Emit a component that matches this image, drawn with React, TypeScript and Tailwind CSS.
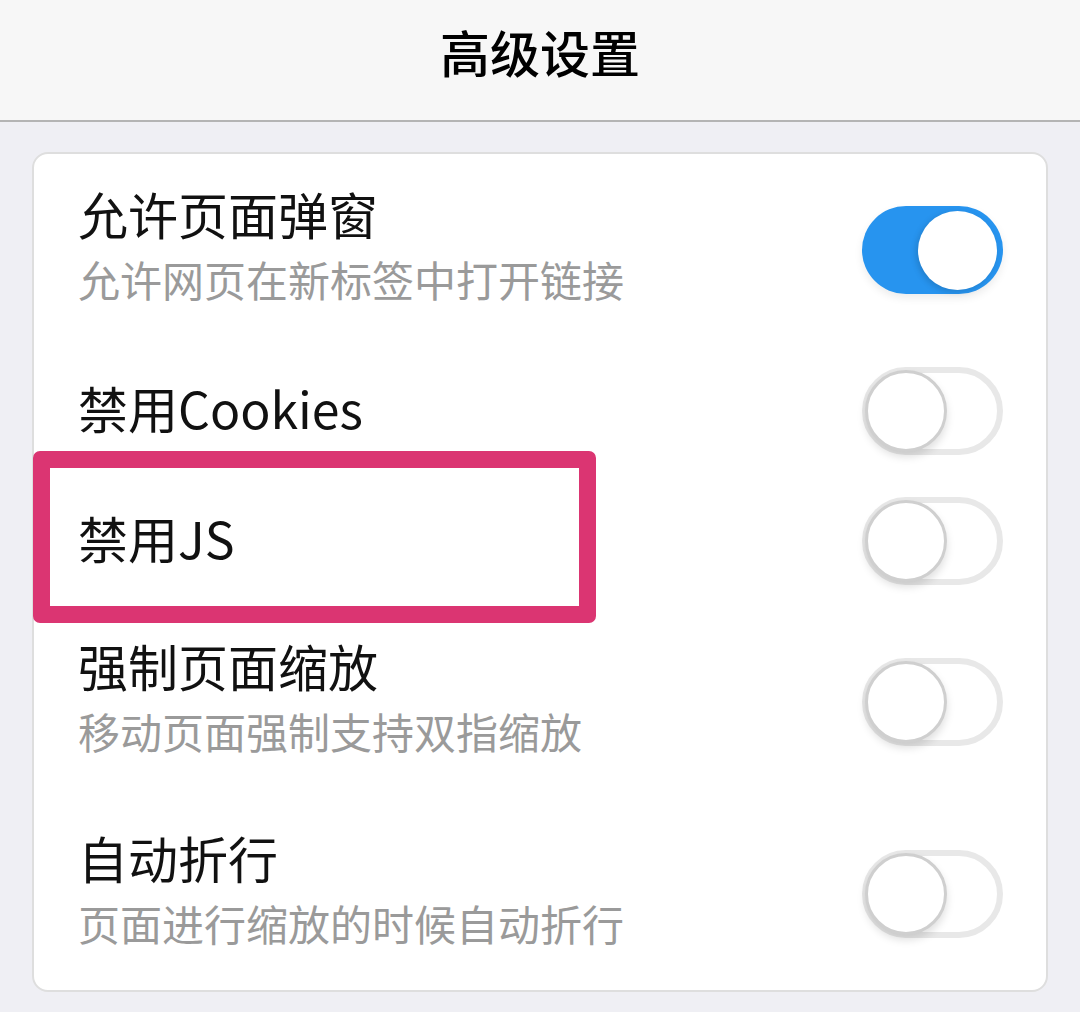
import { useState } from "react";

interface ISetting {
  id: string;
  title: string;
  desc?: string;
  on: boolean;
}

const settings: ISetting[] = [
  { id: "popup", title: "允许页面弹窗", desc: "允许网页在新标签中打开链接", on: true },
  { id: "cookies", title: "禁用Cookies", on: false },
  { id: "js", title: "禁用JS", on: false },
  { id: "zoom", title: "强制页面缩放", desc: "移动页面强制支持双指缩放", on: false },
  { id: "wrap", title: "自动折行", desc: "页面进行缩放的时候自动折行", on: false },
];

const Toggle = ({ on, onClick }: { on: boolean; onClick: () => void }): JSX.Element => {
  if (on) {
    return (
      <button
        type="button"
        onClick={onClick}
        className="flex items-center justify-end w-[141px] h-[88px] rounded-full bg-[#2794ef] pr-[6px] shadow-[0_4px_8px_rgba(0,0,0,0.08)]"
      >
        <span className="block w-[79px] h-[79px] rounded-full bg-white shadow-[-2px_2px_6px_rgba(0,0,0,0.15)]" />
      </button>
    );
  }
  return (
    <button
      type="button"
      onClick={onClick}
      className="flex items-center justify-start w-[141px] h-[88px] rounded-full bg-white border-[6px] border-[#e8e8e8]"
    >
      <span className="block -ml-[3px] shrink-0 w-[82px] h-[82px] rounded-full bg-white border-[3px] border-[#cfcfcf] shadow-[0_5px_8px_rgba(0,0,0,0.13)]" />
    </button>
  );
};

export default function App(): JSX.Element {
  const [values, setValues] = useState<Record<string, boolean>>(
    Object.fromEntries(settings.map((s) => [s.id, s.on]))
  );

  const toggle = (id: string) => setValues((v) => ({ ...v, [id]: !v[id] }));

  return (
    <div
      className="relative w-[1080px] h-[1012px] bg-[#efeff4] overflow-hidden"
      style={{ fontFamily: '"Noto Sans CJK SC", "Noto Sans", sans-serif' }}
    >
      {/* Header ============================================ */}
      <div className="h-[122px] bg-[#f7f7f7] border-b-2 border-[#b4b4b4] flex items-center justify-center pb-[18px]">
        <span className="text-[50px] font-medium text-black leading-none">高级设置</span>
      </div>

      {/* Card ============================================ */}
      <div className="mx-[32px] mt-[30px] bg-white rounded-[16px] border-2 border-[#dedede]">
        {settings.map((s) => (
          <div
            key={s.id}
            className={`flex items-center justify-between pl-[44px] pr-[43px] ${s.desc ? "h-[192px]" : "h-[130px]"}`}
          >
            <div className="flex flex-col mb-[8px]">
              <span className="text-[50px] leading-[65px] text-[#111]">{s.title}</span>
              {s.desc && (
                <span className="text-[42px] leading-[65px] text-[#9a9a9a]">{s.desc}</span>
              )}
            </div>
            <Toggle on={values[s.id]} onClick={() => toggle(s.id)} />
          </div>
        ))}
      </div>

      {/* Highlight annotation */}
      <div className="absolute left-[33px] top-[451px] w-[563px] h-[172px] border-[17px] border-[#db3572] rounded-[7px] pointer-events-none" />
    </div>
  );
}
